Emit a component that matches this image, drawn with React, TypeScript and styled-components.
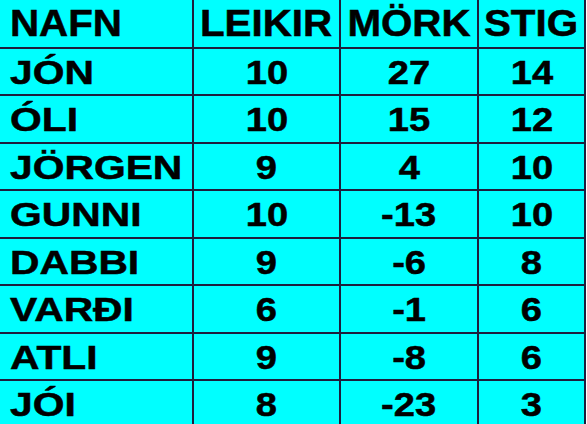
import React from "react";
import styled, { createGlobalStyle } from "styled-components";

const Global = createGlobalStyle`
  html, body { margin: 0; padding: 0; background: #ffffff; }
  body { font-family: "Liberation Sans", Arial, sans-serif; overflow: hidden; }
`;

const Table = styled.div`
  display: grid;
  width: 586px;
  height: 424px;
  box-sizing: border-box;
  padding-right: 2px;
  background: #1e1e3c;
  grid-template-columns: 192px 145px 136px 105px;
  grid-template-rows: 47px 45px 46px 45px 46px 45px 46px 45px 46px;
  column-gap: 2px;
  row-gap: 2px;
  overflow: hidden;
`;

type Align = "left" | "center";

const Cell = styled.div<{ $align: Align }>`
  background: #00ffff;
  display: flex;
  align-items: center;
  justify-content: ${(p) => (p.$align === "left" ? "flex-start" : "center")};
  padding-left: ${(p) => (p.$align === "left" ? "10px" : "0")};
  overflow: hidden;
`;

const Text = styled.span<{ $head?: boolean; $align: Align }>`
  display: inline-block;
  font-weight: bold;
  color: #000;
  -webkit-text-stroke: 0.5px #000;
  font-size: ${(p) => (p.$head ? "36px" : "34px")};
  line-height: 1;
  white-space: nowrap;
  transform: scaleX(${(p) => (!p.$head && p.$align === "left" ? 1.2 : 1.12)});
  transform-origin: ${(p) => (p.$align === "left" ? "left center" : "center center")};
`;

const header = ["NAFN", "LEIKIR", "MÖRK", "STIG"];
const rows: [string, string, string, string][] = [
  ["JÓN", "10", "27", "14"],
  ["ÓLI", "10", "15", "12"],
  ["JÖRGEN", "9", "4", "10"],
  ["GUNNI", "10", "-13", "10"],
  ["DABBI", "9", "-6", "8"],
  ["VARÐI", "6", "-1", "6"],
  ["ATLI", "9", "-8", "6"],
  ["JÓI", "8", "-23", "3"],
];

export default function App() {
  return (
    <>
      <Global />
      <Table>
        {header.map((h, i) => {
          const align: Align = i === 0 ? "left" : "center";
          return (
            <Cell key={"h" + i} $align={align}>
              <Text $head $align={align}>{h}</Text>
            </Cell>
          );
        })}
        {rows.map((r, ri) =>
          r.map((v, ci) => {
            const align: Align = ci === 0 ? "left" : "center";
            return (
              <Cell key={ri + "-" + ci} $align={align}>
                <Text $align={align}>{v}</Text>
              </Cell>
            );
          })
        )}
      </Table>
    </>
  );
}
